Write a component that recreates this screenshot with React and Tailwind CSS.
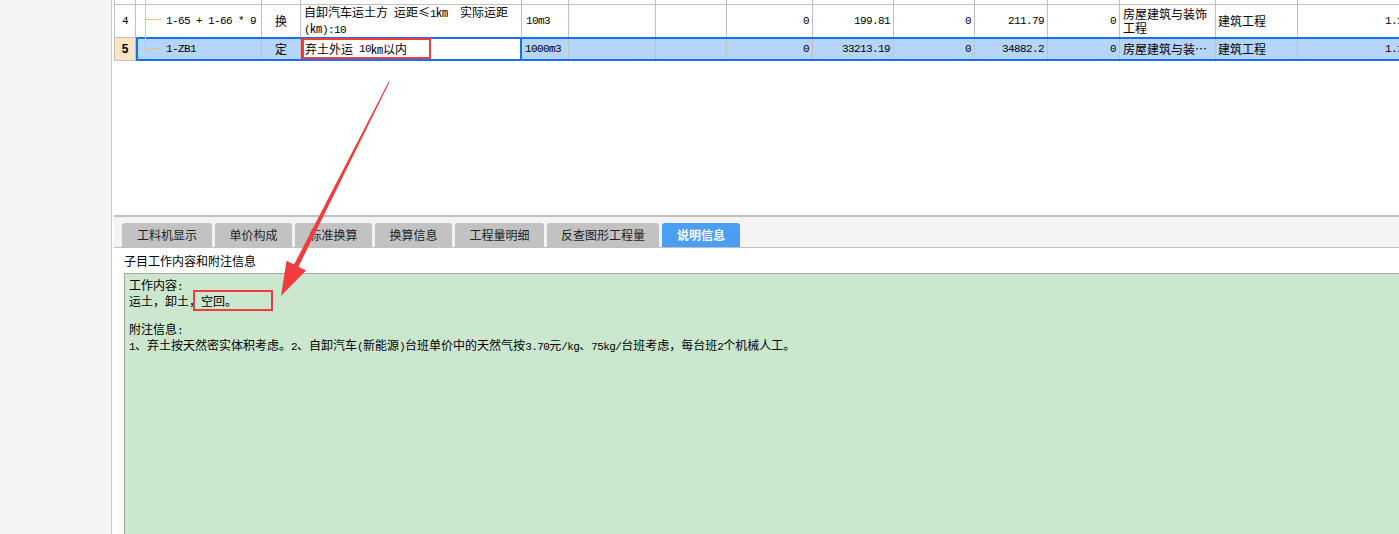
import React from 'react'

const cols = ['w-[22px]', 'w-[126px]', 'w-[39px]', 'w-[221px]', 'w-[47px]', 'w-[87px]', 'w-[71px]', 'w-[86px]', 'w-[81px]', 'w-[81px]', 'w-[73px]', 'w-[72px]', 'w-[96px]', 'w-[82px]', 'w-[115px]']

// ascii runs get a narrow mono face, like the half-width glyphs of the original
function Mix({ text }) {
    const parts = text.match(/[\x20-\x7e]+|[^\x20-\x7e]+/g) || []
    return parts.map((p, i) => /^[\x20-\x7e]/.test(p)
        ? <span key={i} className="font-['Liberation_Mono',monospace] text-[11px] tracking-[-0.6px] text-black">{p}</span>
        : <span key={i}>{p}</span>)
}

const tabs = ['工料机显示', '单价构成', '标准换算', '换算信息', '工程量明细', '反查图形工程量', '说明信息']
const tabW = ['w-[90px]', 'w-[77px]', 'w-[77px]', 'w-[77px]', 'w-[89px]', 'w-[112px]', 'w-[78px]']

function Num({ w, v }) {
    return (
        <div className={`${w} shrink-0 h-full border-r border-[#c0c0c0] flex items-center justify-end pr-[3px]`}>
            <Mix text={v} />
        </div>
    )
}

function Blank({ w }) {
    return <div className={`${w} shrink-0 h-full border-r border-[#c0c0c0]`} />
}

export default function App() {
    return (
        <div className="relative flex w-[1399px] h-[534px] overflow-hidden bg-white text-[12px] text-black font-['Noto_Sans_CJK_SC',sans-serif] whitespace-pre">
            <div className="w-[112px] shrink-0 bg-[#f4f4f4] border-r border-[#c8c8c8]" />

            <div className="flex-1 min-w-0 flex flex-col pl-[2px]">
                {/* grid */}
                <div className="h-[215px] shrink-0 overflow-hidden">
                    <div className="flex h-[5px] border-b border-[#c0c0c0]">
                        {cols.map((w, i) => (
                            <div key={i} className={`${w} shrink-0 h-full border-r border-[#c0c0c0] relative ${i === 0 ? 'border-l' : ''}`}>
                                {i === 1 && <span className="absolute left-[9px] top-0 bottom-[-1px] w-px bg-[#f9bf6c]" />}
                            </div>
                        ))}
                    </div>

                    <div className="flex h-[32px] leading-[14px]">
                        <div className={`${cols[0]} shrink-0 h-full border-l border-r border-[#c0c0c0] flex items-center justify-center`}><Mix text="4" /></div>
                        <div className={`${cols[1]} shrink-0 h-full border-r border-[#c0c0c0] relative flex items-center pl-[30px]`}>
                            <span className="absolute left-[9px] top-0 bottom-0 w-px bg-[#f9bf6c]" />
                            <span className="absolute left-[9px] top-[14px] w-[16px] h-px bg-[#f9bf6c]" />
                            <Mix text="1-65 + 1-66 * 9" />
                        </div>
                        <div className={`${cols[2]} shrink-0 h-full border-r border-[#c0c0c0] flex items-center justify-center`}>换</div>
                        <div className={`${cols[3]} shrink-0 h-full border-r border-[#c0c0c0] flex flex-col justify-center pl-[3px]`}>
                            <div><Mix text="自卸汽车运土方 运距≤1㎞  实际运距" /></div>
                            <div><Mix text="(㎞):10" /></div>
                        </div>
                        <div className={`${cols[4]} shrink-0 h-full border-r border-[#c0c0c0] flex items-center pl-[4px]`}><Mix text="10m3" /></div>
                        <Blank w={cols[5]} />
                        <Blank w={cols[6]} />
                        <Num w={cols[7]} v="0" />
                        <Num w={cols[8]} v="199.81" />
                        <Num w={cols[9]} v="0" />
                        <Num w={cols[10]} v="211.79" />
                        <Num w={cols[11]} v="0" />
                        <div className={`${cols[12]} shrink-0 h-full border-r border-[#c0c0c0] flex flex-col justify-center pl-[3px]`}>
                            <div>房屋建筑与装饰</div>
                            <div>工程</div>
                        </div>
                        <div className={`${cols[13]} shrink-0 h-full border-r border-[#c0c0c0] flex items-center pl-[2px]`}>建筑工程</div>
                        <Num w={cols[14]} v="1.15" />
                    </div>

                    <div className="flex h-[24px]">
                        <div className={`${cols[0]} shrink-0 h-full border border-[#c0c0c0] bg-[#fde4c5] flex items-center justify-center font-bold`}>
                            <span className="font-['Liberation_Sans',sans-serif] text-[12px]">5</span>
                        </div>
                        <div className="flex shrink-0 h-full border-2 border-[#1470f0] bg-[#b6d5fc]">
                            <div className="w-[124px] shrink-0 h-full border-r border-[#c0c0c0] relative flex items-center pl-[28px]">
                                <span className="absolute left-[7px] top-[-2px] h-[11px] w-px bg-[#f9bf6c]" />
                                <span className="absolute left-[7px] top-[9px] w-[16px] h-px bg-[#f9bf6c]" />
                                <Mix text="1-ZB1" />
                            </div>
                            <div className={`${cols[2]} shrink-0 h-full border-r border-[#c0c0c0] flex items-center justify-center`}>定</div>
                            <div className={`${cols[3]} shrink-0 h-full border-x-2 border-[#1470f0] bg-white flex items-center pl-[2px]`}>
                                <Mix text="弃土外运 10㎞以内" />
                            </div>
                            <div className={`${cols[4]} shrink-0 h-full border-r border-[#c0c0c0] flex items-center pl-[3px]`}><Mix text="1000m3" /></div>
                            <Blank w={cols[5]} />
                            <Blank w={cols[6]} />
                            <Num w={cols[7]} v="0" />
                            <Num w={cols[8]} v="33213.19" />
                            <Num w={cols[9]} v="0" />
                            <Num w={cols[10]} v="34882.2" />
                            <Num w={cols[11]} v="0" />
                            <div className={`${cols[12]} shrink-0 h-full border-r border-[#c0c0c0] flex items-center pl-[3px]`}>房屋建筑与装…</div>
                            <div className={`${cols[13]} shrink-0 h-full border-r border-[#c0c0c0] flex items-center pl-[2px]`}>建筑工程</div>
                            <Num w={cols[14]} v="1.15" />
                        </div>
                    </div>
                </div>

                <div className="h-[2px] shrink-0 bg-[#c0c0c0]" />

                {/* tabs */}
                <div className="h-[31px] shrink-0 bg-[#f3f3f3] border-b border-[#c0c0c0] flex items-end gap-[3px] pl-[8px]">
                    {tabs.map((t, i) => (
                        <div key={t} className={`${tabW[i]} h-[24px] rounded-t-[3px] flex items-center justify-center ${i === 6 ? 'bg-[#4a9ff5] text-white font-bold' : 'bg-[#c2c2c2] text-[#222]'}`}>
                            {t}
                        </div>
                    ))}
                </div>

                <div className="h-[25px] shrink-0 flex items-center pl-[10px]">子目工作内容和附注信息</div>

                <div className="flex-1 ml-[10px] border-l border-t border-[#a8a8a8] bg-[#cbe8cf] pl-[4px] pt-[4px] leading-[14px]">
                    <div><Mix text="工作内容:" /></div>
                    <div>运土，卸土，空回。</div>
                    <div className="h-[14px]" />
                    <div><Mix text="附注信息:" /></div>
                    <div><Mix text="1、弃土按天然密实体积考虑。2、自卸汽车(新能源)台班单价中的天然气按3.70元/kg、75kg/台班考虑，每台班2个机械人工。" /></div>
                </div>
            </div>

            {/* annotations */}
            <div className="absolute left-[302px] top-[38px] w-[129px] h-[21px] border-2 border-[#f03c3c]" />
            <div className="absolute left-[193px] top-[290px] w-[80px] h-[21px] border-2 border-[#f03c3c]" />
            <svg className="absolute left-0 top-0 pointer-events-none" width="1399" height="534">
                <polygon
                    points="389.5,82.2 298.5,266.7 306.1,270.5 281,296 286.5,260.7 294.1,264.5 388.6,81.8"
                    fill="#f03c3c"
                />
            </svg>
        </div>
    )
}
